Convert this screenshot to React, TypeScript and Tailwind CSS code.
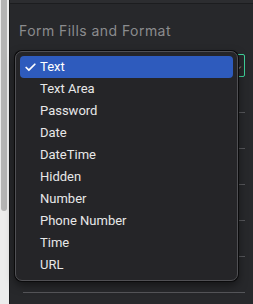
import { Check } from 'lucide-react';

const OPTIONS = ['Text', 'Text Area', 'Password', 'Date', 'DateTime', 'Hidden', 'Number', 'Phone Number', 'Time', 'URL'];

export default function App() {
  const selected = 'Text';

  return (
    <div className="relative flex w-[253px] h-[304px] overflow-hidden font-['Inter',sans-serif]">
      {/* scrollbar strip */}
      <div className="w-[10px] flex bg-[#ececec] border-r border-[#1b1c1e]">
        <div className="w-[6px] h-[211px] ml-[1px] rounded-b-[3px] bg-[#b4b4b4]" />
      </div>

      {/* panel */}
      <div className="flex-1 flex flex-col bg-[#27282b]">
        <div className="h-[3px] bg-[#2c2d30] border-b border-[#1c1d1f] box-content" />
        <h2 className="mt-[18px] ml-[9px] text-[14px] leading-[18px] text-[#8b8c8e] tracking-[0.45px]">Form Fills and Format</h2>

        <div className="mt-[14px] ml-[13px] mr-[8px] h-[23px] border border-[#3fd29a] rounded-[2px] flex items-center justify-end pr-[2px]">
          <span className="text-[8px] text-[#9a9a9a] leading-none">⌄</span>
        </div>

        <div className="ml-[13px] mr-[8px] flex flex-col">
          {[0, 1, 2, 3, 4].map((i) => (
            <div key={i} className="h-[36px] border-b border-[#55565a]" />
          ))}
          <div className="h-[36px] border-b border-[#55565a] flex items-end pb-[6px] pl-[5px]">
            <span className="text-[13px] text-[#6c6d70]">Form ID</span>
          </div>
        </div>
      </div>

      {/* dropdown menu */}
      <div className="absolute left-[15px] top-[51px] w-[223px] h-[230px] rounded-[7px] bg-[#252528] border border-[#505054] shadow-[0_0_0_1px_#0b0b0c,0_4px_10px_rgba(0,0,0,0.5)] px-[4px] pt-[4px] font-['Roboto',sans-serif]">
        {OPTIONS.map((opt) => (
          <div
            key={opt}
            className={`relative h-[22px] flex items-center pl-[20px] rounded-[4px] text-[13px] ${
              opt === selected ? 'bg-[#2e5bbd] text-white' : 'text-[#e8e8e8]'
            }`}
          >
            {opt === selected && (
              <Check size={13} strokeWidth={3.2} className="absolute left-[4px] top-[5px] text-white" />
            )}
            {opt}
          </div>
        ))}
      </div>
    </div>
  );
}
